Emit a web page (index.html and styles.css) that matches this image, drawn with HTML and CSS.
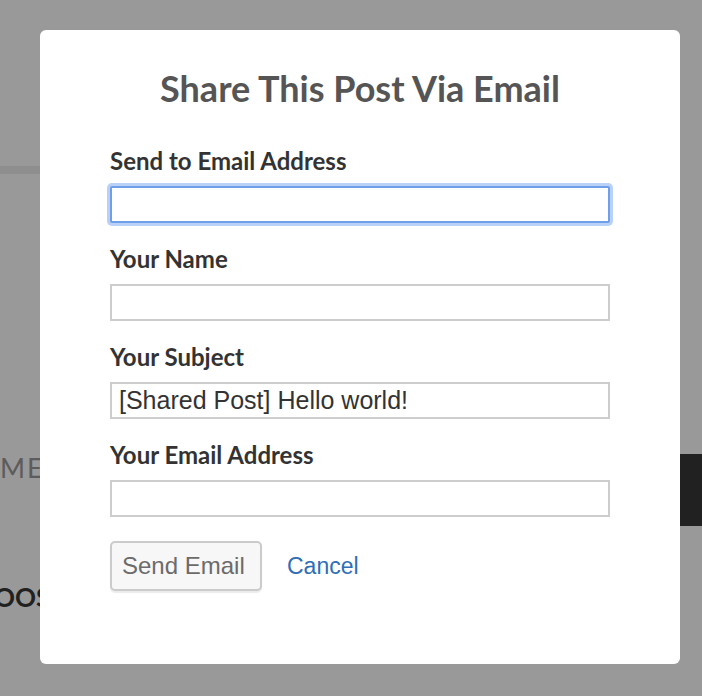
FILE: index.html
```html
<!DOCTYPE html>
<html>
<head>
<meta charset="utf-8">
<link rel="stylesheet" href="styles.css">
</head>
<body>
<div class="page">
  <div class="page-header"></div>
  <div class="page-rule"></div>
  <div class="page-nav">
    <span class="nav-item">ME</span>
    <span class="nav-block"></span>
  </div>
  <div class="page-heading">OOS</div>
</div>
<div class="overlay"></div>
<div class="modal">
  <h1 class="modal-title">Share This Post Via Email</h1>
  <form class="share-form">
    <div class="field">
      <label class="field-label">Send to Email Address</label>
      <input class="field-input is-focused" type="text">
    </div>
    <div class="field">
      <label class="field-label">Your Name</label>
      <input class="field-input" type="text">
    </div>
    <div class="field">
      <label class="field-label">Your Subject</label>
      <input class="field-input" type="text" value="[Shared Post] Hello world!">
    </div>
    <div class="field">
      <label class="field-label">Your Email Address</label>
      <input class="field-input" type="text">
    </div>
    <div class="actions">
      <button class="btn-send" type="button">Send Email</button>
      <a class="link-cancel" href="#">Cancel</a>
    </div>
  </form>
</div>
</body>
</html>
```
FILE: styles.css
```css
html, body {
  margin: 0;
  padding: 0;
}
body {
  width: 702px;
  height: 696px;
  overflow: hidden;
  background: #fff;
  font-family: Lato, "Liberation Sans", sans-serif;
}
.page {
  display: flex;
  flex-direction: column;
}
.page-header {
  height: 166px;
}
.page-rule {
  height: 8px;
  width: 620px;
  background: #ededed;
}
.page-nav {
  margin-top: 280px;
  height: 72px;
  display: flex;
  align-items: flex-start;
  justify-content: space-between;
}
.nav-item {
  font-size: 27px;
  line-height: 34px;
  letter-spacing: 2px;
  color: #9a9a9a;
  margin-top: -3px;
}
.nav-block {
  width: 300px;
  height: 72px;
  background: #383838;
}
.page-heading {
  margin-top: 56px;
  margin-left: -6px;
  font-size: 26px;
  font-weight: 700;
  color: #383838;
  line-height: 30px;
}
.overlay {
  position: fixed;
  inset: 0;
  background: rgba(0, 0, 0, 0.4);
}
.modal {
  position: absolute;
  left: 40px;
  top: 30px;
  width: 640px;
  height: 634px;
  background: #fff;
  border-radius: 6px;
  box-sizing: border-box;
  padding: 36px 70px 0;
}
.modal-title {
  margin: 0 0 36px;
  text-align: center;
  font-family: Lato, sans-serif;
  font-weight: 700;
  font-size: 36px;
  line-height: 44px;
  color: #555;
}
.share-form {
  display: flex;
  flex-direction: column;
  gap: 21px;
}
.field {
  display: flex;
  flex-direction: column;
  gap: 10px;
}
.field-label {
  font-family: Lato, sans-serif;
  font-weight: 700;
  font-size: 24px;
  line-height: 30px;
  color: #333;
}
.field-input {
  box-sizing: border-box;
  width: 500px;
  height: 37px;
  margin: 0;
  padding: 0 7px;
  border: 2px solid #cdcdcd;
  border-radius: 0;
  outline: none;
  font-family: "Liberation Sans", Arial, sans-serif;
  font-size: 25px;
  color: #333;
  background: #fff;
}
.field-input.is-focused {
  border-color: #6f9fe8;
  box-shadow: 0 0 0 3px #b9d1f7;
  border-radius: 2px;
}
.actions {
  margin-top: 3px;
  display: flex;
  align-items: center;
  gap: 25px;
}
.btn-send {
  box-sizing: border-box;
  width: 152px;
  height: 50px;
  padding: 0 0 0 10px;
  text-align: left;
  border: 2px solid #cbcbcb;
  border-radius: 5px;
  background: #f7f7f7;
  box-shadow: 0 2px 1px rgba(0, 0, 0, 0.08);
  font-family: "Liberation Sans", Arial, sans-serif;
  font-size: 24px;
  color: #6b6b6b;
}
.link-cancel {
  font-family: "Liberation Sans", Arial, sans-serif;
  font-size: 23px;
  color: #2f6eb8;
  text-decoration: none;
}
```
